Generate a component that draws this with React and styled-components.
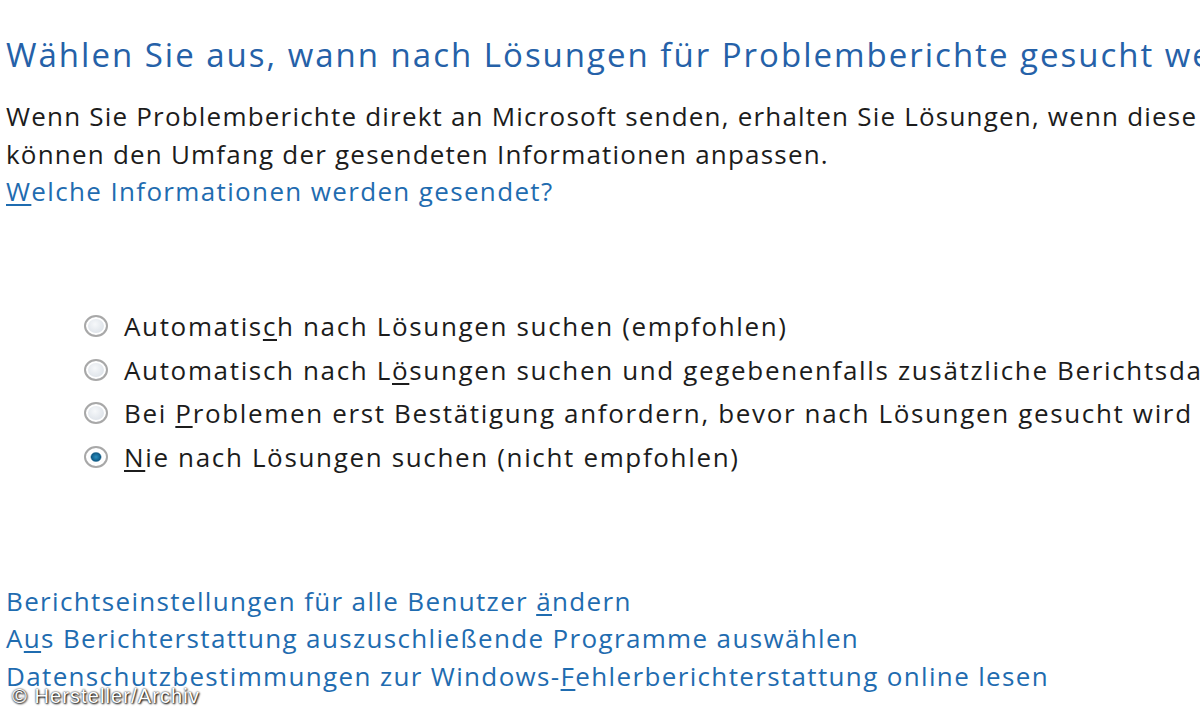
import styled, { createGlobalStyle } from "styled-components";

const GlobalStyle = createGlobalStyle`
  html, body {
    margin: 0;
    padding: 0;
    background: #ffffff;
    overflow: hidden;
  }
`;

const options = [
  { before: "Automatis", key: "c", after: "h nach Lösungen suchen (empfohlen)" },
  { before: "Automatisch nach L", key: "ö", after: "sungen suchen und gegebenenfalls zusätzliche Berichtsdaten senden" },
  { before: "Bei ", key: "P", after: "roblemen erst Bestätigung anfordern, bevor nach Lösungen gesucht wird" },
  { before: "", key: "N", after: "ie nach Lösungen suchen (nicht empfohlen)", checked: true },
];

const links = [
  { before: "Berichtseinstellungen für alle Benutzer ", key: "ä", after: "ndern" },
  { before: "A", key: "u", after: "s Berichterstattung auszuschließende Programme auswählen" },
  { before: "Datenschutzbestimmungen zur Windows-", key: "F", after: "ehlerberichterstattung online lesen" },
];

export default function App() {
  return (
    <Page>
      <GlobalStyle />
      <Title>Wählen Sie aus, wann nach Lösungen für Problemberichte gesucht werden soll</Title>
      <Intro>
        <Line>Wenn Sie Problemberichte direkt an Microsoft senden, erhalten Sie Lösungen, wenn diese verfügbar sind. Sie</Line>
        <Line>können den Umfang der gesendeten Informationen anpassen.</Line>
        <Link>
          <u>W</u>elche Informationen werden gesendet?
        </Link>
      </Intro>

      <Options>
        {options.map((o, i) => (
          <Option key={i}>
            <Radio checked={o.checked} />
            <span>
              {o.before}
              <u>{o.key}</u>
              {o.after}
            </span>
          </Option>
        ))}
      </Options>

      <Links>
        {links.map((l, i) => (
          <Link key={i}>
            {l.before}
            <u>{l.key}</u>
            {l.after}
          </Link>
        ))}
      </Links>

      <Credit>© Hersteller/Archiv</Credit>
    </Page>
  );
}

const Page = styled.div`
  position: relative;
  width: 1200px;
  height: 720px;
  overflow: hidden;
  box-sizing: border-box;
  padding: 33px 0 0 6px;
  font-family: "Open Sans", "Noto Sans", sans-serif;
  white-space: nowrap;
`;

const Title = styled.h1`
  margin: 0;
  font-size: 33px;
  font-weight: 400;
  line-height: 44px;
  letter-spacing: 2px;
  color: #2561a8;
`;

const Intro = styled.div`
  margin-top: 21px;
  display: flex;
  flex-direction: column;
`;

const Line = styled.div`
  font-size: 26px;
  line-height: 37.5px;
  letter-spacing: 1.2px;
  color: #1c1c1c;
`;

const Link = styled.div`
  font-size: 26px;
  line-height: 37.5px;
  letter-spacing: 1.35px;
  color: #1f6cb0;

  u {
    text-underline-offset: 3px;
  }
`;

const Options = styled.div`
  margin-top: 94px;
  padding-left: 78px;
  display: flex;
  flex-direction: column;
`;

const Option = styled.div`
  display: flex;
  align-items: center;
  gap: 16px;
  height: 43.5px;
  font-size: 26px;
  letter-spacing: 1.65px;
  color: #1c1c1c;

  u {
    text-underline-offset: 3px;
  }
`;

const Radio = styled.span`
  flex: none;
  width: 20px;
  height: 18px;
  border-radius: 50%;
  border: 2px solid #a8a8a8;
  background: ${(p) =>
    p.checked
      ? "radial-gradient(ellipse, #2a90c0 0, #0e5a86 32%, #ffffff 42%, #eef1f4 100%)"
      : "radial-gradient(ellipse at 45% 40%, #f6f8fa 0, #dfe4ea 60%, #cfd5dc 100%)"};
  box-shadow: inset 0 0 0 2px #ffffff;
`;

const Links = styled.div`
  margin-top: 104px;
  display: flex;
  flex-direction: column;
`;

const Credit = styled.div`
  position: absolute;
  left: 12px;
  bottom: 12px;
  font-family: "Liberation Sans", Arial, sans-serif;
  font-size: 20px;
  letter-spacing: 1.1px;
  color: #ffffff;
  text-shadow: 0 0 2px #000, 1px 1px 2px #000;
`;
